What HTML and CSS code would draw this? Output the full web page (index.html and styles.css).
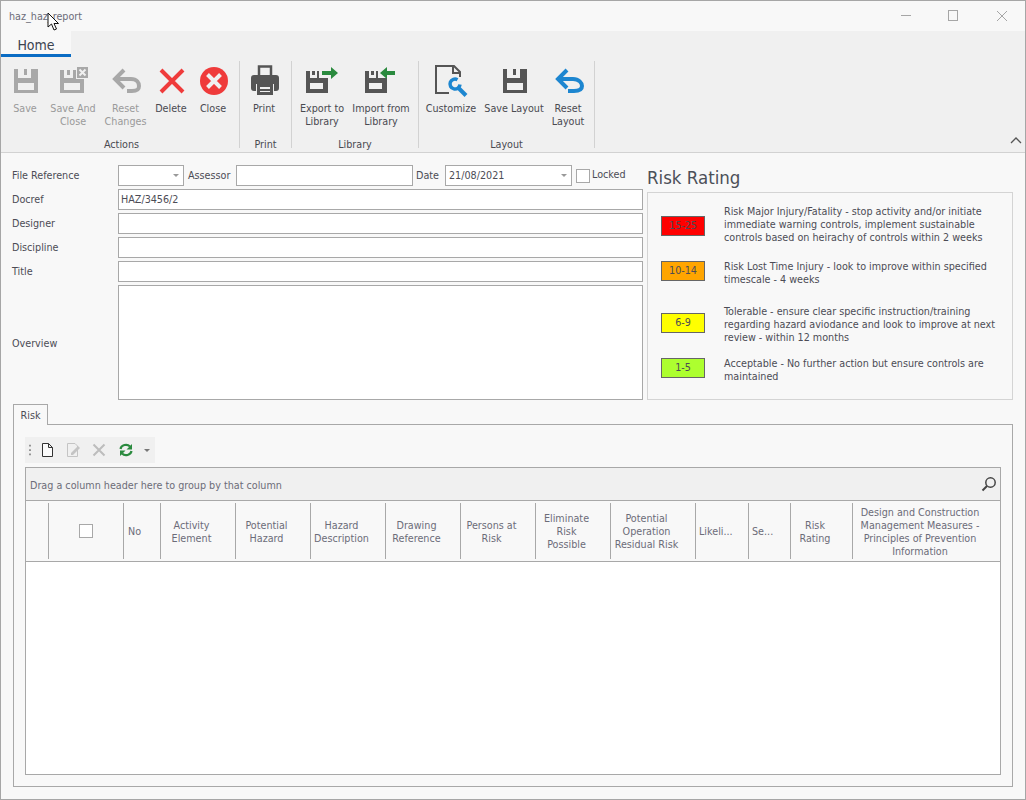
FILE: index.html
```html
<!DOCTYPE html>
<html lang="en">
<head>
<meta charset="utf-8">
<title>haz_haz_report</title>
<link rel="stylesheet" href="styles.css">
</head>
<body>
<div class="window">
  <header class="titlebar">
    <span class="title">haz_haz_report</span>
    <div class="winbtns">
      <svg class="winbtn" viewBox="0 0 12 12"><path d="M2 5.500H12" stroke="#a6a6a6" fill="none"/></svg>
      <svg class="winbtn" viewBox="0 0 12 12"><rect x="1.500" y="0.500" width="9" height="10" stroke="#a6a6a6" fill="none"/></svg>
      <svg class="winbtn" viewBox="0 0 12 12"><path d="M2 1L12 11M12 1L2 11" stroke="#a6a6a6" fill="none"/></svg>
    </div>
  </header>
  <nav class="tabstrip"><span class="hometab">Home</span></nav>
  <section class="ribbon">
    <div class="rgroup">
      <div class="ritems">
        <div class="ritem w42 off"><svg class="ricon" viewBox="0 0 42 32"><path fill="#a8a8a8" fill-rule="evenodd" d="M10 4H34V28H10Z M14 4V13H27V4H23V10H20V4Z M14 18V25H30V18Z"/></svg><span>Save</span></div>
        <div class="ritem w54 off"><svg class="ricon" viewBox="0 0 54 32"><path fill="#a8a8a8" fill-rule="evenodd" d="M14 5H30V14H38V28H14Z M18 5V13H27V5H24V10H21V5Z M18 18V25H34V18Z"/><path fill="#a8a8a8" d="M31 2H42V13H31Z"/><path stroke="#f0f0f0" stroke-width="2" d="M33.500 4.500L39.500 10.500M39.500 4.500L33.500 10.500"/></svg><span>Save And Close</span></div>
        <div class="ritem w51 off"><svg class="ricon" viewBox="0 0 51 32"><path fill="none" stroke="#a8a8a8" stroke-width="4" d="M15 14H31C37 14 39 18 39 21C39 25 37 26 32 26H27"/><path fill="none" stroke="#a8a8a8" stroke-width="4" d="M24 5L15 14L24 23"/></svg><span>Reset Changes</span></div>
        <div class="ritem w40"><svg class="ricon" viewBox="0 0 40 32"><path stroke="#ef3b3b" stroke-width="4" d="M10 5L32 27M32 5L10 27"/></svg><span>Delete</span></div>
        <div class="ritem w44"><svg class="ricon" viewBox="0 0 44 32"><circle cx="23" cy="16" r="14" fill="#ef3b3b"/><path stroke="#f0f0f0" stroke-width="4" d="M16.500 9.500L29.500 22.500M29.500 9.500L16.500 22.500"/></svg><span>Close</span></div>
      </div>
      <div class="rlabel">Actions</div>
    </div>
    <div class="rgroup g2">
      <div class="ritems">
        <div class="ritem w42"><svg class="ricon" viewBox="0 0 42 32"><path fill="#555" d="M11 10H33C35 10 36 11 36 13V23C36 25 35 26 33 26H31V19H13V26H11C9 26 8 25 8 23V13C8 11 9 10 11 10Z"/><path fill="none" stroke="#555" stroke-width="2.500" d="M16 10V1.500H28V10"/><path fill="#555" fill-rule="evenodd" d="M14 18H30V30H14ZM17 22V24H27V22ZM17 26V27H27V26Z"/></svg><span>Print</span></div>
      </div>
      <div class="rlabel">Print</div>
    </div>
    <div class="rgroup g3">
      <div class="ritems">
        <div class="ritem w54"><svg class="ricon" viewBox="0 0 54 32"><path fill="#555" fill-rule="evenodd" d="M11 6H24V13H33V28H11Z M15 6V13H22V6H20V10H17V6Z M15 18V24H28V18Z"/><path fill="#2a8a3e" d="M27 6H36V2L43 8L36 14V10H27Z"/></svg><span>Export to Library</span></div>
        <div class="ritem w64"><svg class="ricon" viewBox="0 0 64 32"><path fill="#555" fill-rule="evenodd" d="M16 6H29V13H38V28H16Z M20 6V13H27V6H25V10H22V6Z M20 18V24H33V18Z"/><path fill="#2a8a3e" d="M46 6H38V2L31 8L38 14V10H46Z"/></svg><span>Import from Library</span></div>
      </div>
      <div class="rlabel">Library</div>
    </div>
    <div class="rgroup g4">
      <div class="ritems">
        <div class="ritem w58"><svg class="ricon" viewBox="0 0 58 32"><path fill="none" stroke="#555" stroke-width="2" d="M27 28H14V1H32L38 7V12M31 1V8H38"/><path fill="none" stroke="#1d86d0" stroke-width="3.500" d="M35.500 14.700A5 5 0 1 0 38 19.500"/><path fill="none" stroke="#1d86d0" stroke-width="4" d="M36 22.500L44 30.500"/></svg><span>Customize</span></div>
        <div class="ritem w68"><svg class="ricon" viewBox="0 0 68 32"><path fill="#555" fill-rule="evenodd" d="M23 4H47V28H23Z M27 4V13H40V4H36V10H33V4Z M27 18V25H43V18Z"/></svg><span>Save Layout</span></div>
        <div class="ritem w40"><svg class="ricon" viewBox="0 0 40 32"><path fill="none" stroke="#1d86d0" stroke-width="4" d="M10 14H25C31 14 34 18 34 21C34 25 31 26 26 26H20"/><path fill="none" stroke="#1d86d0" stroke-width="4" d="M19 5L10 14L19 23"/></svg><span>Reset Layout</span></div>
      </div>
      <div class="rlabel">Layout</div>
    </div>
    <svg class="collapse" viewBox="0 0 12 8"><path d="M1 6L6 1L11 6" fill="none" stroke="#555" stroke-width="1.300"/></svg>
  </section>
  <main class="content">
    <div class="top">
      <form class="form">
        <label class="flabel">File Reference</label>
        <div class="firstrow">
          <div class="field combo narrow"><svg class="caret" viewBox="0 0 6 3"><path d="M0 0H6L3 3Z" fill="#999"/></svg></div>
          <label class="inl assessor">Assessor</label>
          <div class="field assessorbox"></div>
          <label class="inl datel">Date</label>
          <div class="field combo datebox">21/08/2021<svg class="caret" viewBox="0 0 6 3"><path d="M0 0H6L3 3Z" fill="#999"/></svg></div>
          <span class="check locked"></span>
          <label class="inl lockedl">Locked</label>
        </div>
        <label class="flabel">Docref</label><div class="field">HAZ/3456/2</div>
        <label class="flabel">Designer</label><div class="field"></div>
        <label class="flabel">Discipline</label><div class="field"></div>
        <label class="flabel">Title</label><div class="field"></div>
        <label class="flabel overview">Overview</label><div class="field area"></div>
      </form>
      <aside class="riskcol">
        <h2 class="risktitle">Risk Rating</h2>
        <div class="riskpanel">
          <span class="swatch high">15-25</span><p class="first">Risk Major Injury/Fatality - stop activity and/or initiate immediate warning controls, implement sustainable controls based on heirachy of controls within 2 weeks</p>
          <span class="swatch mid">10-14</span><p>Risk Lost Time Injury - look to improve within specified timescale - 4 weeks</p>
          <span class="swatch tol">6-9</span><p>Tolerable - ensure clear specific instruction/training regarding hazard aviodance and look to improve at next review - within 12 months</p>
          <span class="swatch low">1-5</span><p>Acceptable - No further action but ensure controls are maintained</p>
        </div>
      </aside>
    </div>
    <div class="tabs">
      <div class="tabhead"><span class="risktab">Risk</span><span class="tabline"></span></div>
      <div class="tabbody">
        <div class="toolbar">
          <svg class="tb-grip" viewBox="0 0 4 16"><path d="M1 2h2v2H1zM1 7h2v2H1zM1 12h2v2H1z" fill="#888"/></svg>
          <svg class="tb-new" viewBox="0 0 14 14"><path d="M2.500 .5H8.500L12.500 4.500V13.500H2.500ZM8.500 .5V4.500H12.500" fill="#fbfbfb" stroke="#333"/></svg>
          <svg class="tb-edit" viewBox="0 0 16 14"><path d="M1.500 .5H9L11.500 3V13.500H1.500Z" fill="none" stroke="#c4c4c4"/><path d="M5 10L12 3L14 5L7 12H5Z" fill="#c4c4c4"/></svg>
          <svg class="tb-del" viewBox="0 0 14 14"><path d="M1.500 1.500L12.500 12.500M12.500 1.500L1.500 12.500" stroke="#bdbdbd" stroke-width="2"/></svg>
          <svg class="tb-ref" viewBox="0 0 14 14"><path d="M1.500 6A5.500 5 0 0 1 11 3.500M12.500 8A5.500 5 0 0 1 3 10.500" fill="none" stroke="#2a8a3e" stroke-width="2.200"/><path d="M13 1V6.500H7.500ZM1 13V7.500H6.500Z" fill="#2a8a3e"/></svg>
          <svg class="tb-caret" viewBox="0 0 6 3"><path d="M0 0H6L3 3Z" fill="#777"/></svg>
        </div>
        <div class="grid">
          <div class="groupbar">
            <span>Drag a column header here to group by that column</span>
            <svg class="search" viewBox="0 0 16 16"><circle cx="9.500" cy="6.500" r="4.700" fill="none" stroke="#444" stroke-width="1.500"/><path d="M6 10L1.500 14.500" stroke="#444" stroke-width="2"/></svg>
          </div>
          <div class="gridhead">
            <div class="col"></div>
            <div class="col chk"><span class="check"></span></div>
            <div class="col left">No</div>
            <div class="col">Activity<br>Element</div>
            <div class="col">Potential<br>Hazard</div>
            <div class="col">Hazard<br>Description</div>
            <div class="col">Drawing<br>Reference</div>
            <div class="col">Persons at<br>Risk</div>
            <div class="col">Eliminate<br>Risk<br>Possible</div>
            <div class="col">Potential<br>Operation<br>Residual Risk</div>
            <div class="col left tight">Likeli...</div>
            <div class="col left tight">Se...</div>
            <div class="col">Risk<br>Rating</div>
            <div class="col last">Design and Construction<br>Management Measures -<br>Principles of Prevention<br>Information</div>
          </div>
          <div class="gridbody"></div>
        </div>
      </div>
    </div>
  </main>
  <svg class="cursor" viewBox="0 0 13 20"><path d="M1 1V15L4.500 12L7 18L9.500 17L7 11.500H11.500Z" fill="#fff" stroke="#111" stroke-width="1"/></svg>
</div>
</body>
</html>
```
FILE: styles.css
```css
* { box-sizing: border-box; }
html, body { margin: 0; padding: 0; }
body { font-family: "DejaVu Sans", "Noto Sans", sans-serif; font-stretch: condensed; font-size: 10.7px; color: #4c4c55; background: #f8f8f8; }
.window { position: relative; width: 1026px; height: 800px; border: 1px solid #a6a6a6; background: #f8f8f8; overflow: hidden; display: flex; flex-direction: column; }

.titlebar { height: 30px; background: #f8f8f8; display: flex; align-items: center; justify-content: space-between; flex: none; }
.title { margin-left: 8px; padding-top: 2px; color: #6c6c78; line-height: 30px; }
.winbtns { display: flex; gap: 36px; margin-right: 18px; }
.winbtn { width: 12px; height: 12px; display: block; }

.tabstrip { height: 26px; background: #f0f0f0; flex: none; }
.hometab { display: block; width: 70px; height: 26px; background: #f8f8f8; border-bottom: 3px solid #0a6cc4; text-align: center; font-size: 14px; line-height: 28px; color: #3c4450; }

.ribbon { position: relative; height: 96px; background: #f0f0f0; border-bottom: 1px solid #d2d2d2; display: flex; padding: 4px 0 0 3px; flex: none; }
.rgroup { width: 236px; height: 87px; border-right: 1px solid #d2d2d2; display: flex; flex-direction: column; }
.g2 { width: 52px; }
.g3 { width: 127px; }
.g4 { width: 176px; }
.ritems { display: flex; height: 74px; flex: none; }
.g2 .ritems, .g3 .ritems, .g4 .ritems { padding-left: 3px; }
.ritem { display: flex; flex-direction: column; align-items: center; text-align: center; line-height: 13px; color: #4a4a50; }
.ritem span { display: block; margin-top: 5px; }
.off { color: #9a9a9a; }
.ricon { height: 32px; display: block; margin-top: 4px; flex: none; }
.w40 { width: 40px; } .w40 .ricon { width: 40px; }
.w42 { width: 42px; } .w42 .ricon { width: 42px; }
.w44 { width: 44px; } .w44 .ricon { width: 44px; }
.w51 { width: 51px; } .w51 .ricon { width: 51px; }
.w54 { width: 54px; } .w54 .ricon { width: 54px; }
.w58 { width: 58px; } .w58 .ricon { width: 58px; }
.w64 { width: 64px; } .w64 .ricon { width: 64px; }
.w68 { width: 68px; } .w68 .ricon { width: 68px; }
.rlabel { text-align: center; line-height: 13px; margin-top: 3px; color: #4a4a50; }
.collapse { position: absolute; right: 3px; bottom: 7px; width: 12px; height: 8px; }

.content { flex: 1; padding: 12px 12px 12px 11px; display: flex; flex-direction: column; min-height: 0; }
.top { display: flex; gap: 4px; height: 235px; flex: none; }
.form { width: 631px; display: grid; grid-template-columns: 106px 1fr; grid-template-rows: 21px 21px 21px 21px 21px 115px; row-gap: 3px; align-items: center; }
.flabel { color: #4c4c55; }
.overview { padding-top: 2px; }
.field { height: 100%; border: 1px solid #a8a8a8; background: #fff; padding: 0 2px; line-height: 19px; color: #4c4c55; }
.firstrow { display: flex; height: 21px; align-items: center; width: 525px; }
.combo { position: relative; }
.narrow { width: 66px; flex: none; }
.caret { position: absolute; right: 4px; top: 8px; width: 6px; height: 3px; }
.inl { flex: none; }
.assessor { width: 52px; padding-left: 4px; }
.assessorbox { width: 177px; flex: none; }
.datel { width: 32px; padding-left: 3px; }
.datebox { width: 127px; flex: none; padding-left: 3px; }
.check { display: block; width: 14px; height: 14px; border: 1px solid #a8a8a8; background: #fff; }
.locked { margin-left: 4px; flex: none; }
.lockedl { margin-left: 2px; padding-bottom: 2px; }
.area { height: 115px; }

.riskcol { width: 366px; }
.risktitle { margin: 0; height: 27px; font-size: 18.5px; font-weight: 400; line-height: 25px; color: #4c5058; }
.riskpanel { height: 208px; border: 1px solid #d4d4d4; padding: 11px 0 0 13px; display: grid; grid-template-columns: 44px 272px; grid-template-rows: 56px 45px 52px auto; column-gap: 19px; line-height: 13px; align-items: start; }
.riskpanel p { margin: 0; }
.riskpanel .first { padding-top: 1px; }
.swatch { display: block; width: 44px; height: 20px; border: 1px solid #666; text-align: center; line-height: 18px; color: #4c4c55; }
.high { background: #ff0000; margin-top: 12px; }
.mid { background: #ffa500; margin-top: 1px; }
.tol { background: #ffff00; margin-top: 8px; }
.low { background: #adff2f; margin-top: 1px; }

.tabs { margin: 4px 0 0 1px; flex: 1; display: flex; flex-direction: column; min-height: 0; }
.tabhead { display: flex; height: 21px; flex: none; }
.risktab { width: 35px; border: 1px solid #a8a8a8; border-bottom: 0; text-align: center; line-height: 21px; background: #f8f8f8; color: #4c4c55; }
.tabline { flex: 1; border-bottom: 1px solid #a8a8a8; }
.tabbody { flex: 1; border: 1px solid #a8a8a8; border-top: 0; padding: 12px 11px 11px 11px; display: flex; flex-direction: column; min-height: 0; }

.toolbar { width: 130px; height: 26px; background: #f0f0f0; display: flex; align-items: center; flex: none; padding-left: 3px; }
.toolbar svg { display: block; flex: none; height: 14px; }
.tb-grip { width: 4px; }
.tb-new { width: 14px; margin-left: 8px; }
.tb-edit { width: 16px; margin-left: 12px; }
.tb-del { width: 14px; margin-left: 10px; }
.tb-ref { width: 14px; margin-left: 13px; }
.toolbar .tb-caret { width: 6px; height: 3px; margin-left: 11px; }

.grid { margin-top: 4px; flex: 1; border: 1px solid #a8a8a8; display: flex; flex-direction: column; min-height: 0; }
.groupbar { height: 33px; background: #f0f0f0; border-bottom: 1px solid #a8a8a8; display: flex; align-items: center; justify-content: space-between; padding: 0 3px 0 4px; flex: none; color: #6c6c78; }
.groupbar span { padding-top: 2px; }
.search { width: 16px; height: 16px; display: block; }
.gridhead { height: 61px; padding: 2px 0 2px; background: #f8f8f8; border-bottom: 1px solid #a8a8a8; display: grid; grid-template-columns: 23px 75px 37px repeat(6, 75px) 85px 53px 42px 62px 1fr; flex: none; line-height: 13px; }
.col { border-right: 1px solid #a8a8a8; display: flex; align-items: center; justify-content: center; text-align: center; padding: 1px 13px 0 0; white-space: nowrap; color: #6c6c78; }
.col.chk { padding: 0; }
.col.left { justify-content: flex-start; text-align: left; padding: 0 0 0 4px; }
.col.left.tight { padding-left: 3px; }
.col.last { border-right: 0; }
.gridbody { flex: 1; background: #fff; }

.cursor { position: absolute; left: 46px; top: 11px; width: 13px; height: 20px; }
```
